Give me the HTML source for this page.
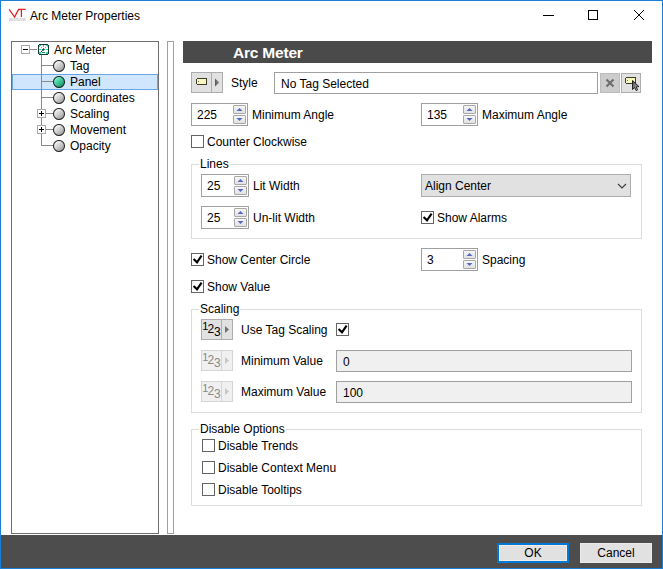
<!DOCTYPE html>
<html><head><meta charset="utf-8">
<style>
*{box-sizing:border-box;margin:0;padding:0}
html,body{width:663px;height:569px;overflow:hidden;background:#fff}
body{position:relative;font-family:"Liberation Sans",sans-serif;font-size:12px;color:#000}
.a{position:absolute}
.t{position:absolute;line-height:14px;white-space:nowrap}
.win{position:absolute;left:0;top:0;width:663px;height:569px;border:1px solid #1a7fd6}
.gb{position:absolute;border:1px solid #dcdcdc}
.gl{position:absolute;background:#fff;padding:0 1px 0 1px;line-height:14px}
.cb{position:absolute;width:13px;height:13px;border:1px solid #646464;background:#fff}
.spin{position:absolute;border:1px solid #a0a0a0;background:#fff}
.sb svg{position:absolute;left:2px;top:1px}
.sb{position:absolute;width:13px;height:9px;border:1px solid #a8a8a8;border-radius:1px;background:linear-gradient(#f6f6f6,#e2e2e2)}
.btn{position:absolute;background:#e1e1e1;border:1px solid #adadad}
</style></head><body>
<div class="win"></div>

<!-- title bar -->
<svg class="a" style="left:8px;top:8px" width="20" height="15" viewBox="0 0 20 15">
  <path d="M1.2 1.4 L6.6 9 L10.6 1.4" fill="none" stroke="#e31e1e" stroke-width="1.25"/>
  <path d="M10 1.4 H17.6 M13.4 1.4 V9" fill="none" stroke="#e31e1e" stroke-width="1.25"/>
  <rect x="1" y="10.2" width="16.6" height="2.6" fill="#d6d6d6"/>
  <rect x="3" y="11" width="12" height="1" fill="#e8e8e8"/>
</svg>
<div class="t" style="left:30px;top:9px">Arc Meter Properties</div>
<div class="a" style="left:543px;top:15px;width:11px;height:1px;background:#000"></div>
<div class="a" style="left:588px;top:10px;width:10px;height:10px;border:1px solid #000"></div>
<svg class="a" style="left:634px;top:10px" width="10" height="10" shape-rendering="crispEdges"><g fill="#000"><rect x="0" y="0" width="1" height="1"/><rect x="9" y="0" width="1" height="1"/><rect x="1" y="1" width="1" height="1"/><rect x="8" y="1" width="1" height="1"/><rect x="2" y="2" width="1" height="1"/><rect x="7" y="2" width="1" height="1"/><rect x="3" y="3" width="1" height="1"/><rect x="6" y="3" width="1" height="1"/><rect x="4" y="4" width="1" height="1"/><rect x="5" y="4" width="1" height="1"/><rect x="5" y="5" width="1" height="1"/><rect x="4" y="5" width="1" height="1"/><rect x="6" y="6" width="1" height="1"/><rect x="3" y="6" width="1" height="1"/><rect x="7" y="7" width="1" height="1"/><rect x="2" y="7" width="1" height="1"/><rect x="8" y="8" width="1" height="1"/><rect x="1" y="8" width="1" height="1"/><rect x="9" y="9" width="1" height="1"/><rect x="0" y="9" width="1" height="1"/></g></svg>

<!-- tree -->
<div class="a" style="left:11px;top:41px;width:148px;height:493px;border:1px solid #707070"></div>
<div class="a" style="left:12px;top:74px;width:146px;height:16px;background:#d0e6fd;border:1px solid #68a6e6"></div>
<!-- tree lines -->
<div class="a" style="left:41px;top:55px;width:1px;height:91px;background:#8a8a8a"></div>
<div class="a" style="left:30px;top:49px;width:7px;height:1px;background:#8a8a8a"></div>
<div class="a" style="left:21px;top:45px;width:9px;height:9px;border:1px solid #a8a8a8;background:#fff"></div>
<div class="a" style="left:23px;top:49px;width:5px;height:1px;background:#000"></div>
<svg class="a" style="left:38px;top:44px" width="11" height="11" viewBox="0 0 11 11" shape-rendering="crispEdges">
  <path d="M1 0 H10 V1 H11 V10 H10 V11 H1 V10 H0 V1 H1 Z" fill="#0d3d2b"/>
  <rect x="1" y="1" width="9" height="9" fill="#35d49e"/>
  <path d="M3 1 H8 V2 H9 V3 H10 V8 H9 V9 H8 V10 H3 V9 H2 V8 H1 V3 H2 V2 H3 Z" fill="#fff4f8"/>
  <rect x="5" y="1" width="1" height="2" fill="#35d49e"/>
  <rect x="1" y="5" width="2" height="1" fill="#35d49e"/>
  <rect x="8" y="5" width="2" height="1" fill="#35d49e"/>
  <rect x="3" y="3" width="1" height="1" fill="#35d49e"/>
  <rect x="7" y="3" width="1" height="1" fill="#35d49e"/>
  <rect x="2" y="8" width="1" height="1" fill="#35d49e"/>
  <rect x="8" y="8" width="1" height="1" fill="#35d49e"/>
  <path d="M5 4 H6 V5 H7 V6 H6 V7 H5 V6 H4 V5 H5 Z" fill="#1b8f64"/>
  <rect x="5" y="5" width="1" height="1" fill="#0d3d2b"/>
  <rect x="3" y="7" width="1" height="1" fill="#0d3d2b"/>
  <rect x="4" y="6" width="1" height="1" fill="#1b8f64"/>
  <rect x="4" y="8" width="3" height="1" fill="#1b8f64"/>
</svg>
<div class="t" style="left:54px;top:43px">Arc Meter</div>

<!-- rows -->
<div class="a" style="left:42px;top:65px;width:11px;height:1px;background:#8a8a8a"></div>
<div class="a" style="left:42px;top:81px;width:11px;height:1px;background:#8a8a8a"></div>
<div class="a" style="left:42px;top:97px;width:11px;height:1px;background:#8a8a8a"></div>
<div class="a" style="left:46px;top:113px;width:7px;height:1px;background:#8a8a8a"></div>
<div class="a" style="left:46px;top:129px;width:7px;height:1px;background:#8a8a8a"></div>
<div class="a" style="left:42px;top:145px;width:11px;height:1px;background:#8a8a8a"></div>
<div class="a" style="left:37px;top:109px;width:9px;height:9px;border:1px solid #a8a8a8;background:#fff"></div>
<div class="a" style="left:39px;top:113px;width:5px;height:1px;background:#000"></div>
<div class="a" style="left:41px;top:111px;width:1px;height:5px;background:#000"></div>
<div class="a" style="left:37px;top:125px;width:9px;height:9px;border:1px solid #a8a8a8;background:#fff"></div>
<div class="a" style="left:39px;top:129px;width:5px;height:1px;background:#000"></div>
<div class="a" style="left:41px;top:127px;width:1px;height:5px;background:#000"></div>

<svg class="a" style="left:53px;top:60px" width="12" height="12"><defs><linearGradient id="gg" x1="0.15" y1="0.1" x2="0.85" y2="0.9"><stop offset="0" stop-color="#fdfdfd"/><stop offset="0.45" stop-color="#d2d2d2"/><stop offset="1" stop-color="#9a9a9a"/></linearGradient></defs><circle cx="6" cy="6" r="5.5" fill="url(#gg)" stroke="#2e2e2e" stroke-width="1.1"/></svg>
<svg class="a" style="left:53px;top:76px" width="12" height="12"><defs><linearGradient id="gr" x1="0.15" y1="0.1" x2="0.85" y2="0.9"><stop offset="0" stop-color="#b0f5dd"/><stop offset="0.35" stop-color="#48d8aa"/><stop offset="1" stop-color="#258a68"/></linearGradient></defs><circle cx="6" cy="6" r="5.5" fill="url(#gr)" stroke="#1a2a24" stroke-width="1.1"/></svg>
<svg class="a" style="left:53px;top:92px" width="12" height="12"><circle cx="6" cy="6" r="5.5" fill="url(#gg)" stroke="#2e2e2e" stroke-width="1.1"/></svg>
<svg class="a" style="left:53px;top:108px" width="12" height="12"><circle cx="6" cy="6" r="5.5" fill="url(#gg)" stroke="#2e2e2e" stroke-width="1.1"/></svg>
<svg class="a" style="left:53px;top:124px" width="12" height="12"><circle cx="6" cy="6" r="5.5" fill="url(#gg)" stroke="#2e2e2e" stroke-width="1.1"/></svg>
<svg class="a" style="left:53px;top:140px" width="12" height="12"><circle cx="6" cy="6" r="5.5" fill="url(#gg)" stroke="#2e2e2e" stroke-width="1.1"/></svg>
<div class="t" style="left:70px;top:59px">Tag</div>
<div class="t" style="left:70px;top:75px">Panel</div>
<div class="t" style="left:70px;top:91px">Coordinates</div>
<div class="t" style="left:70px;top:107px">Scaling</div>
<div class="t" style="left:70px;top:123px">Movement</div>
<div class="t" style="left:70px;top:139px">Opacity</div>

<!-- splitter -->
<div class="a" style="left:167px;top:41px;width:7px;height:493px;border:1px solid #a0a0a0"></div>

<!-- header -->
<div class="a" style="left:183px;top:41px;width:469px;height:22px;background:#4a4a4a"></div>
<div class="t" style="left:233px;top:45px;font-weight:bold;font-size:15.5px;line-height:16px;letter-spacing:-0.2px;color:#fff">Arc Meter</div>


<!-- style row -->
<div class="btn" style="left:191px;top:72px;width:32px;height:21px"></div>
<div class="a" style="left:211px;top:73px;width:1px;height:19px;background:#adadad"></div>
<svg class="a" style="left:196px;top:78px" width="11" height="7" shape-rendering="crispEdges"><path d="M1 0 H11 V7 H1 L0 6 V1 Z" fill="#f9f7c0"/><g fill="#3d3d2c"><rect x="1" y="0" width="10" height="1"/><rect x="1" y="6" width="10" height="1"/><rect x="10" y="0" width="1" height="7"/><rect x="0" y="1" width="1" height="5"/><rect x="2" y="3" width="1" height="1" fill="#707060"/></g></svg>
<svg class="a" style="left:214px;top:78px" width="7" height="9"><defs><linearGradient id="ar"><stop offset="0" stop-color="#505050"/><stop offset="1" stop-color="#a8a8a8"/></linearGradient></defs><path d="M1 0.5 L5.5 4.5 L1 8.5 Z" fill="url(#ar)"/></svg>
<div class="t" style="left:231px;top:76px">Style</div>
<div class="a" style="left:274px;top:72px;width:324px;height:22px;border:1px solid #a0a0a0;background:#fff"></div>
<div class="t" style="left:281px;top:77px">No Tag Selected</div>
<div class="a" style="left:600px;top:73px;width:20px;height:20px;background:#cccccc;border:1px solid #bcbcbc"></div>
<svg class="a" style="left:600px;top:73px" width="20" height="20"><path d="M6.5 6.5 L13.5 13.5 M13.5 6.5 L6.5 13.5" stroke="#6e6e6e" stroke-width="2.2"/></svg>
<div class="btn" style="left:621px;top:73px;width:20px;height:20px;background:#e1e1e1"></div>
<svg class="a" style="left:621px;top:73px" width="20" height="20"><g shape-rendering="crispEdges"><path d="M5 4 H15 V11 H5 L4 10 V5 Z" fill="#f9f7c0"/><g fill="#3d3d2c"><rect x="5" y="4" width="10" height="1"/><rect x="5" y="10" width="10" height="1"/><rect x="14" y="4" width="1" height="7"/><rect x="4" y="5" width="1" height="5"/><rect x="6" y="7" width="1" height="1" fill="#707060"/></g></g><defs><linearGradient id="cur" x1="0" y1="0" x2="1" y2="1"><stop offset="0" stop-color="#444"/><stop offset="1" stop-color="#c8c8c8"/></linearGradient></defs><path d="M11.5 7.5 L11.5 16.5 L13.6 14.6 L15.2 17.6 L16.6 16.9 L15.1 13.9 L18 13.6 Z" fill="url(#cur)" stroke="#151515" stroke-width="0.9" stroke-linejoin="round"/></svg>

<!-- angle row -->
<div class="spin" style="left:191px;top:103px;width:57px;height:23px"></div>
<div class="sb" style="left:233px;top:105px"><svg width="7" height="5"><path d="M0.5 4 L3.5 1 L6.5 4 Z" fill="#5468c6"/></svg></div><div class="sb" style="left:233px;top:115px"><svg width="7" height="5"><path d="M0.5 1 L3.5 4 L6.5 1 Z" fill="#5468c6"/></svg></div>
<div class="t" style="left:197px;top:108px">225</div>
<div class="t" style="left:252px;top:108px">Minimum Angle</div>
<div class="spin" style="left:421px;top:103px;width:57px;height:23px"></div>
<div class="sb" style="left:463px;top:105px"><svg width="7" height="5"><path d="M0.5 4 L3.5 1 L6.5 4 Z" fill="#5468c6"/></svg></div><div class="sb" style="left:463px;top:115px"><svg width="7" height="5"><path d="M0.5 1 L3.5 4 L6.5 1 Z" fill="#5468c6"/></svg></div>
<div class="t" style="left:427px;top:108px">135</div>
<div class="t" style="left:482px;top:108px">Maximum Angle</div>

<div class="cb" style="left:191px;top:135px"></div>
<div class="t" style="left:207px;top:135px">Counter Clockwise</div>

<!-- lines group -->
<div class="gb" style="left:191px;top:164px;width:451px;height:75px"></div>
<div class="gl" style="left:199px;top:157px">Lines</div>
<div class="spin" style="left:201px;top:174px;width:48px;height:23px"></div>
<div class="sb" style="left:234px;top:176px"><svg width="7" height="5"><path d="M0.5 4 L3.5 1 L6.5 4 Z" fill="#5468c6"/></svg></div><div class="sb" style="left:234px;top:186px"><svg width="7" height="5"><path d="M0.5 1 L3.5 4 L6.5 1 Z" fill="#5468c6"/></svg></div>
<div class="t" style="left:207px;top:179px">25</div>
<div class="t" style="left:253px;top:179px">Lit Width</div>
<div class="spin" style="left:201px;top:206px;width:48px;height:23px"></div>
<div class="sb" style="left:234px;top:208px"><svg width="7" height="5"><path d="M0.5 4 L3.5 1 L6.5 4 Z" fill="#5468c6"/></svg></div><div class="sb" style="left:234px;top:218px"><svg width="7" height="5"><path d="M0.5 1 L3.5 4 L6.5 1 Z" fill="#5468c6"/></svg></div>
<div class="t" style="left:207px;top:211px">25</div>
<div class="t" style="left:253px;top:211px">Un-lit Width</div>
<div class="btn" style="left:421px;top:174px;width:210px;height:23px"></div>
<div class="t" style="left:425px;top:179px">Align Center</div>
<svg class="a" style="left:616px;top:182px" width="12" height="8"><path d="M2 2 L6 6 L10 2" fill="none" stroke="#404040" stroke-width="1.2"/></svg>
<div class="cb" style="left:421px;top:211px"></div><svg class="a" style="left:421px;top:211px" width="13" height="13" viewBox="0 0 13 13"><path d="M2.6 6 L6 9.3 L10.6 2.6" fill="none" stroke="#000" stroke-width="2.1"/></svg>
<div class="t" style="left:437px;top:211px">Show Alarms</div>

<div class="cb" style="left:191px;top:253px"></div><svg class="a" style="left:191px;top:253px" width="13" height="13" viewBox="0 0 13 13"><path d="M2.6 6 L6 9.3 L10.6 2.6" fill="none" stroke="#000" stroke-width="2.1"/></svg>
<div class="t" style="left:207px;top:253px">Show Center Circle</div>
<div class="spin" style="left:421px;top:248px;width:57px;height:23px"></div>
<div class="sb" style="left:463px;top:250px"><svg width="7" height="5"><path d="M0.5 4 L3.5 1 L6.5 4 Z" fill="#5468c6"/></svg></div><div class="sb" style="left:463px;top:260px"><svg width="7" height="5"><path d="M0.5 1 L3.5 4 L6.5 1 Z" fill="#5468c6"/></svg></div>
<div class="t" style="left:427px;top:253px">3</div>
<div class="t" style="left:482px;top:253px">Spacing</div>
<div class="cb" style="left:191px;top:280px"></div><svg class="a" style="left:191px;top:280px" width="13" height="13" viewBox="0 0 13 13"><path d="M2.6 6 L6 9.3 L10.6 2.6" fill="none" stroke="#000" stroke-width="2.1"/></svg>
<div class="t" style="left:207px;top:280px">Show Value</div>

<!-- scaling group -->
<div class="gb" style="left:191px;top:309px;width:451px;height:104px"></div>
<div class="gl" style="left:199px;top:302px">Scaling</div>
<div class="btn" style="left:201px;top:319px;width:32px;height:21px"></div>
<div class="a" style="left:221px;top:320px;width:1px;height:19px;background:#adadad"></div><div class="a" style="left:201px;top:320px;width:20px;height:20px;color:#000"><span class="a" style="left:1.3px;top:0px;font-size:11px;line-height:12px">1</span><span class="a" style="left:6.5px;top:3px;font-size:12px;line-height:12px">2</span><span class="a" style="left:13px;top:6px;font-size:12px;line-height:12px">3</span></div><svg class="a" style="left:224px;top:325px" width="6" height="9"><path d="M1 1 L5 4.5 L1 8 Z" fill="#707070"/></svg>
<div class="t" style="left:241px;top:323px">Use Tag Scaling</div>
<div class="cb" style="left:336px;top:323px"></div><svg class="a" style="left:336px;top:323px" width="13" height="13" viewBox="0 0 13 13"><path d="M2.6 6 L6 9.3 L10.6 2.6" fill="none" stroke="#000" stroke-width="2.1"/></svg>
<div class="btn" style="left:201px;top:350px;width:32px;height:21px;background:#f0f0f0;border-color:#d5d5d5"></div>
<div class="a" style="left:221px;top:351px;width:1px;height:19px;background:#d5d5d5"></div><div class="a" style="left:201px;top:351px;width:20px;height:20px;color:#888"><span class="a" style="left:1.3px;top:0px;font-size:11px;line-height:12px">1</span><span class="a" style="left:6.5px;top:3px;font-size:12px;line-height:12px">2</span><span class="a" style="left:13px;top:6px;font-size:12px;line-height:12px">3</span></div><svg class="a" style="left:224px;top:356px" width="6" height="9"><path d="M1 1 L5 4.5 L1 8 Z" fill="#c8c8c8"/></svg>
<div class="t" style="left:241px;top:354px">Minimum Value</div>
<div class="a" style="left:336px;top:350px;width:296px;height:22px;border:1px solid #a0a0a0;background:#f0f0f0"></div>
<div class="t" style="left:343px;top:355px">0</div>
<div class="btn" style="left:201px;top:381px;width:32px;height:21px;background:#f0f0f0;border-color:#d5d5d5"></div>
<div class="a" style="left:221px;top:382px;width:1px;height:19px;background:#d5d5d5"></div><div class="a" style="left:201px;top:382px;width:20px;height:20px;color:#888"><span class="a" style="left:1.3px;top:0px;font-size:11px;line-height:12px">1</span><span class="a" style="left:6.5px;top:3px;font-size:12px;line-height:12px">2</span><span class="a" style="left:13px;top:6px;font-size:12px;line-height:12px">3</span></div><svg class="a" style="left:224px;top:387px" width="6" height="9"><path d="M1 1 L5 4.5 L1 8 Z" fill="#c8c8c8"/></svg>
<div class="t" style="left:241px;top:385px">Maximum Value</div>
<div class="a" style="left:336px;top:381px;width:296px;height:22px;border:1px solid #a0a0a0;background:#f0f0f0"></div>
<div class="t" style="left:343px;top:386px">100</div>

<!-- disable group -->
<div class="gb" style="left:191px;top:429px;width:451px;height:77px"></div>
<div class="gl" style="left:199px;top:422px">Disable Options</div>
<div class="cb" style="left:202px;top:439px"></div>
<div class="t" style="left:218px;top:439px">Disable Trends</div>
<div class="cb" style="left:202px;top:461px"></div>
<div class="t" style="left:218px;top:461px">Disable Context Menu</div>
<div class="cb" style="left:202px;top:483px"></div>
<div class="t" style="left:218px;top:483px">Disable Tooltips</div>

<!-- bottom bar -->
<div class="a" style="left:1px;top:535px;width:661px;height:33px;background:#4d4d4d"></div>
<div class="a" style="left:497px;top:543px;width:72px;height:20px;border:2px solid #0078d7;background:#e1e1e1;box-shadow:inset 0 0 0 1px #f3ede6"></div>
<div class="t" style="left:497px;top:546px;width:72px;text-align:center">OK</div>
<div class="a" style="left:580px;top:543px;width:72px;height:20px;background:#e1e1e1;border:1px solid #ebebeb"></div>
<div class="t" style="left:580px;top:546px;width:72px;text-align:center">Cancel</div>

</body></html>
